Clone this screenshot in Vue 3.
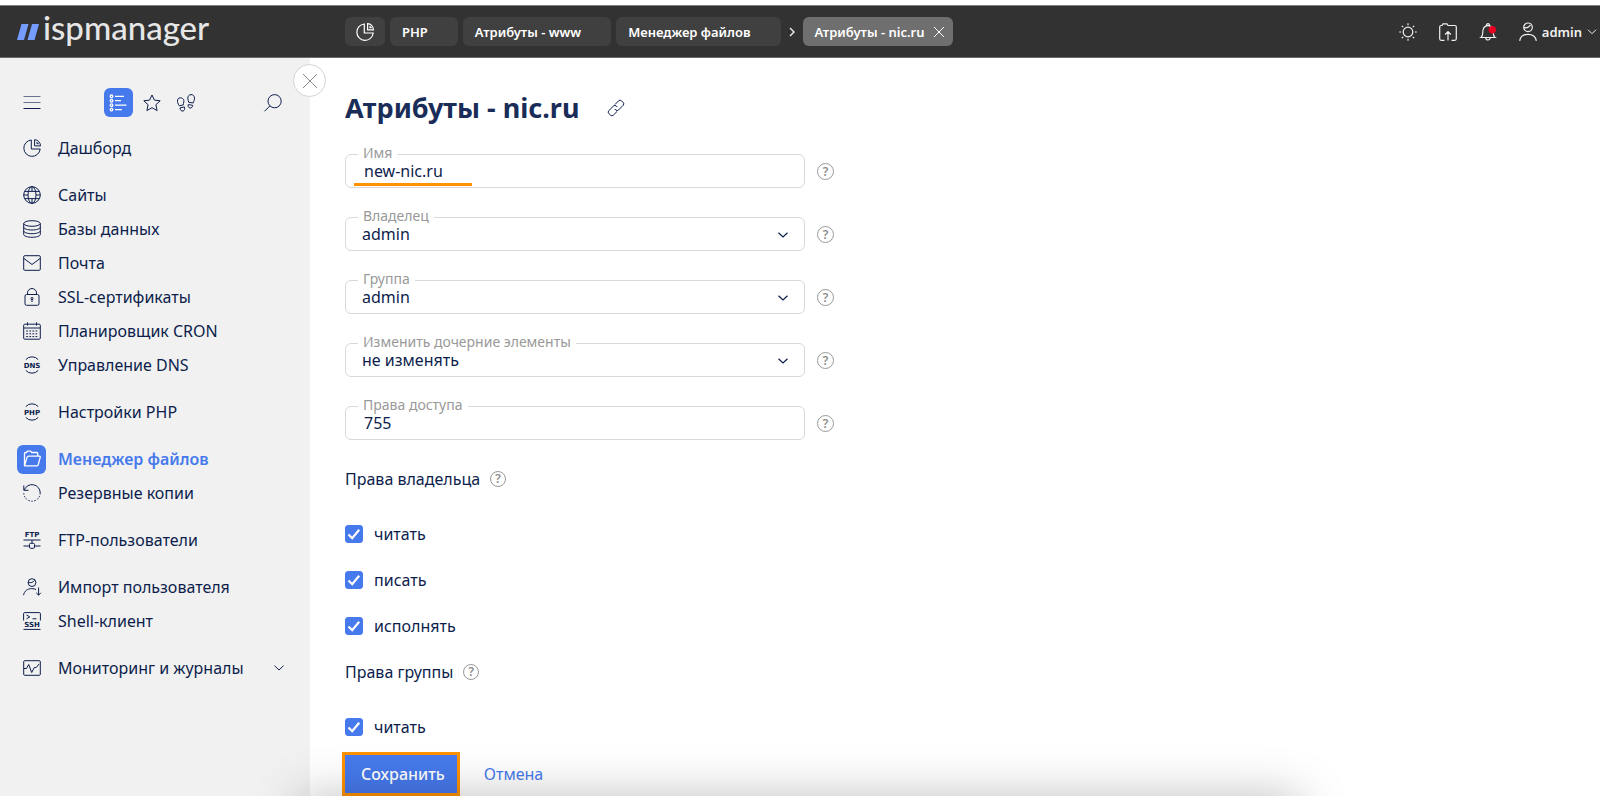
<script setup>
import { reactive, ref } from 'vue'

const tabs = [
  { title: 'PHP' },
  { title: 'Атрибуты - www' },
  { title: 'Менеджер файлов' },
]

const menu = [
  [{ icon: 'pie', title: 'Дашборд' }],
  [
    { icon: 'globe', title: 'Сайты' },
    { icon: 'db', title: 'Базы данных' },
    { icon: 'mail', title: 'Почта' },
    { icon: 'lock', title: 'SSL-сертификаты' },
    { icon: 'calendar', title: 'Планировщик CRON' },
    { icon: 'dns', title: 'Управление DNS' },
  ],
  [{ icon: 'php', title: 'Настройки PHP' }],
  [
    { icon: 'folder', title: 'Менеджер файлов', active: true },
    { icon: 'restore', title: 'Резервные копии' },
  ],
  [{ icon: 'ftp', title: 'FTP-пользователи' }],
  [
    { icon: 'import', title: 'Импорт пользователя' },
    { icon: 'ssh', title: 'Shell-клиент' },
  ],
  [{ icon: 'chart', title: 'Мониторинг и журналы', expandable: true }],
]

const icons = {
  pie: '<path d="M8.300 1A8.200 8.200 0 1 0 17.200 10H8.300z"/><path d="M11.600.7v6.200h5.900A6.200 6.200 0 0 0 11.600.7zM14 3v1.700h1.700"/>',
  globe: '<circle cx="9" cy="9" r="8.3"/><ellipse cx="9" cy="9" rx="4" ry="8.3"/><path d="M1.800 5.4h14.400M1.800 12.6h14.400M9 .7v4.7M9 12.6v4.7M.7 9H5M13 9h4.300"/>',
  db: '<ellipse cx="9" cy="3.500" rx="8.300" ry="2.800"/><path d="M.7 3.500v11c0 1.500 3.700 2.800 8.300 2.800s8.300-1.300 8.300-2.800v-11M.7 7.200C.7 8.700 4.400 10 9 10s8.300-1.300 8.300-2.800M.7 10.900c0 1.500 3.700 2.800 8.300 2.800s8.300-1.300 8.300-2.800"/>',
  mail: '<rect x=".7" y="1.700" width="16.600" height="14.600" rx="1"/><path d="M1 4.500l8 6 8-6"/>',
  lock: '<rect x="2" y="6.500" width="14" height="10.800" rx="1.500"/><path d="M4.500 6.500V5a4.500 4.500 0 0 1 9 0v1.500M9 11.500V14"/><circle cx="9" cy="10.600" r="1.100"/>',
  calendar: '<rect x=".7" y="2.200" width="16.600" height="15" rx="1"/><path d="M.7 6h16.600M4.500.3v3.200M13.500.3v3.200"/><path stroke-dasharray="1.800 1.300" d="M3.200 9h12.200M3.200 11.800h12.200M3.200 14.600h12.200"/>',
  dns: '<path d="M2.800 3.600a8.300 8.300 0 0 1 12.400 0M2.800 14.400a8.300 8.300 0 0 0 12.400 0"/><text x="9" y="11.600">DNS</text>',
  php: '<path d="M2.800 3.600a8.300 8.300 0 0 1 12.400 0M2.800 14.400a8.300 8.300 0 0 0 12.400 0"/><text x="9" y="11.600">PHP</text>',
  folder: '<path d="M1.500 15.700V3.500a1 1 0 0 1 1-1h1l.8-1.400h3.400l.9 1.400h5.200a1 1 0 0 1 1 1V6"/><path d="M1.500 15.700L4 7.500c.3-.9.700-1.300 1.500-1.300h10.800c.8 0 1.100.4.9 1.200l-2 7.300c-.3.800-.7 1.200-1.500 1.200H2.200c-.4 0-.6 0-.7-.2z"/>',
  restore: '<path d="M1.300 6A8.200 8.200 0 0 1 17.200 9M.8 1.500V6.300h4.700"/><path stroke-dasharray="1.500 1.500" d="M17.200 9A8.200 8.200 0 0 1 .8 9"/>',
  ftp: '<text x="9" y="5.500">FTP</text><path d="M.5 9h17M9 9v3M.5 15H6M12 15h5.500"/><rect x="6.500" y="12.300" width="5" height="5" rx="1.200"/>',
  import: '<circle cx="9" cy="4.600" r="3.900"/><path d="M5.300 4.500c2.500.6 5-.2 6.200-2.200M.6 17.200c.5-4.200 4-6.600 8.200-6.600 1.700 0 3 .3 4.200 1M15.600 9.500v7.600M13.200 14.800l2.400 2.400 2.200-2.400"/>',
  ssh: '<path d="M.6 8.500V1.600a1 1 0 0 1 1-1h14.800a1 1 0 0 1 1 1v6.900M3.500 3l3.300 1.900-3.300 1.900M9.500 6.800h4M.5 17.400h17"/><text x="9" y="15">SSH</text>',
  chart: '<rect x=".7" y="1.700" width="16.600" height="14.600" rx="1"/><path d="M.9 9.500h2.600l2.200-4 3 8 2.600-5h2l2.800-3.600"/>',
}

const form = reactive({
  name: 'new-nic.ru',
  owner: 'admin',
  group: 'admin',
  children: 'не изменять',
  mode: '755',
})

const fields = [
  { key: 'name', label: 'Имя', type: 'text', marked: true },
  { key: 'owner', label: 'Владелец', type: 'select' },
  { key: 'group', label: 'Группа', type: 'select' },
  { key: 'children', label: 'Изменить дочерние элементы', type: 'select' },
  { key: 'mode', label: 'Права доступа', type: 'text' },
]

const sections = ref([
  {
    title: 'Права владельца',
    items: [
      { id: 'owner-read', label: 'читать', on: true },
      { id: 'owner-write', label: 'писать', on: true },
      { id: 'owner-exec', label: 'исполнять', on: true },
    ],
  },
  { title: 'Права группы', items: [{ id: 'group-read', label: 'читать', on: true }] },
])
</script>

<template>
  <div class="app">
    <header class="topbar">
      <a class="logo" href="#">
        <svg class="logo-mark" viewBox="0 0 22 16" aria-hidden="true">
          <path d="M4.500 0h7L7 16H0zM15 0h7l-4.500 16h-7z" fill="#759dff" />
        </svg>
        <span>ispmanager</span>
      </a>
      <nav class="tabs">
        <button class="tab tab-home" aria-label="Дашборд">
          <svg class="icon" viewBox="0 0 18 18" v-html="icons.pie"></svg>
        </button>
        <button v-for="t in tabs" :key="t.title" class="tab">{{ t.title }}</button>
        <svg class="crumb" viewBox="0 0 6 10" aria-hidden="true"><path d="M1 1l4 4-4 4" /></svg>
        <button class="tab tab-active">
          Атрибуты - nic.ru
          <svg class="tab-close" viewBox="0 0 12 12" aria-hidden="true"><path d="M1 1l10 10M11 1L1 11" /></svg>
        </button>
      </nav>
      <div class="tools">
        <button class="tool" aria-label="Тема">
          <svg class="icon" viewBox="0 0 18 18">
            <circle cx="9" cy="9" r="4.800" />
            <path d="M9 .2v2M9 15.800v2M.2 9h2M15.800 9h2M2.800 2.800l1.400 1.400M13.800 13.800l1.400 1.400M2.800 15.200l1.400-1.400M13.800 4.200l1.400-1.400" />
          </svg>
        </button>
        <button class="tool" aria-label="Загрузить">
          <svg class="icon" viewBox="0 0 18 18">
            <path d="M5.500 17.300H2.200a1.500 1.500 0 0 1-1.500-1.500V4A1.500 1.500 0 0 1 2.200 2.500h.9L4 .8h4l1 1.700h6.800A1.500 1.500 0 0 1 17.300 4v11.800a1.500 1.500 0 0 1-1.500 1.500h-3.300M9 17.500V9M6 11.700l3-3 3 3" />
          </svg>
        </button>
        <button class="tool" aria-label="Уведомления">
          <svg class="icon" viewBox="0 0 18 18">
            <path d="M2 14.500c1.500-1 1.700-2.300 1.700-4.800C3.700 5 5.500 2.600 9 2.600s5.300 2.400 5.300 7.100c0 2.500.2 3.800 1.700 4.800zM7.600 2.700a1.500 1.500 0 1 1 2.800 0M6.800 14.800a2.200 2.200 0 0 0 4.400 0" />
            <circle cx="13.300" cy="6.700" r="3.700" fill="#eb0023" stroke="none" />
          </svg>
        </button>
        <button class="tool user">
          <svg class="icon" viewBox="0 0 18 18">
            <circle cx="9" cy="4.300" r="4.300" />
            <path d="M5 4.600c2.600.5 5.200-.4 6.400-2.600M.7 17.800c.7-4.300 4-6.500 8.300-6.500s7.600 2.200 8.300 6.500" />
          </svg>
          <span>admin</span>
          <svg class="chevron" viewBox="0 0 10 6"><path d="M1 .7l4 4 4-4" /></svg>
        </button>
      </div>
    </header>

    <div class="body">
      <aside class="sidebar">
        <div class="side-tools">
          <button class="side-btn" aria-label="Меню">
            <svg class="icon" viewBox="0 0 18 18"><path d="M.5 2.500h17M.5 8.500h17" opacity=".6" /><path d="M.5 14.500h17" /></svg>
          </button>
          <div class="side-modes">
            <button class="side-btn side-btn-on" aria-label="Список">
              <svg class="icon" viewBox="0 0 18 18">
                <circle cx="2.500" cy="2.300" r="1.300" /><circle cx="2.500" cy="6.700" r="1.300" />
                <circle cx="2.500" cy="11.200" r="1.300" /><circle cx="2.500" cy="15.600" r="1.300" />
                <path d="M6 2.300h9M6 6.700h6M6 11.200h11.500M6 15.600h7" />
              </svg>
            </button>
            <button class="side-btn" aria-label="Избранное">
              <svg class="icon" viewBox="0 0 18 18">
                <path d="M9 1l2.400 5.100 5.800.7-4.300 3.900 1.200 5.900L9 13.700l-5.100 2.900 1.200-5.900L.8 6.800l5.800-.7z" stroke-linejoin="round" />
              </svg>
            </button>
            <button class="side-btn" aria-label="История">
              <svg class="icon" viewBox="0 0 18 18">
                <path d="M2.300 11.800C.9 9.800.1 7.600.6 5.800c.5-1.600 2-2.300 3.700-1.900 2 .5 2.800 2 2.500 4-.2 1.200-.6 1.900-.5 3zM3 13.900l4.300-1c.8 1.800.4 3.600-1.200 4.100S3 16 3 13.900z" />
                <path d="M11.700 8.300c0-1.300-1-2.400-.9-4.100C10.900 2 12.200.6 14 .6c2 0 3.400 1.300 3.500 3.300.1 1.800-.7 3.400-1.400 5.100zM11.200 10.600l4.500.7c-.1 1.900-1.400 3-2.800 2.700-1.400-.3-2.100-1.700-1.700-3.400z" />
              </svg>
            </button>
          </div>
          <button class="side-btn" aria-label="Поиск">
            <svg class="icon" viewBox="0 0 18 18"><circle cx="10.600" cy="7.200" r="6.600" /><path d="M5.800 12L.5 17.300" /></svg>
          </button>
        </div>
        <nav class="menu">
          <ul v-for="(group, i) in menu" :key="i" class="menu-group">
            <li v-for="m in group" :key="m.title">
              <a href="#" class="menu-item" :class="{ 'menu-item-on': m.active }">
                <span class="menu-icon"><svg class="icon" viewBox="0 0 18 18" v-html="icons[m.icon]"></svg></span>
                <span class="menu-title">{{ m.title }}</span>
                <svg v-if="m.expandable" class="chevron" viewBox="0 0 10 6"><path d="M.5.7L5 5 9.500.7" /></svg>
              </a>
            </li>
          </ul>
        </nav>
        <button class="collapse" aria-label="Закрыть">
          <svg viewBox="0 0 16 16"><path d="M1 1l14 14M15 1L1 15" /></svg>
        </button>
      </aside>

      <main class="main">
        <form class="form" @submit.prevent>
          <div class="scroll">
            <div class="heading">
              <h1>Атрибуты - nic.ru</h1>
              <button type="button" class="link-btn" aria-label="Ссылка">
                <svg class="icon" viewBox="0 0 18 18">
                  <path d="M8 5.500l3.700-3.700a2 2 0 0 1 2.800 0l1.700 1.700a2 2 0 0 1 0 2.800L11.500 11a2 2 0 0 1-2.800 0l-1-1" />
                  <path d="M10 12.500l-3.700 3.700a2 2 0 0 1-2.800 0l-1.700-1.700a2 2 0 0 1 0-2.800L6.500 7a2 2 0 0 1 2.800 0l1 1" />
                </svg>
              </button>
            </div>

            <div class="fields">
              <div v-for="f in fields" :key="f.key" class="field">
                <div class="box" :class="'box-' + f.type">
                  <label :for="f.key">{{ f.label }}</label>
                  <input v-if="f.type === 'text'" :id="f.key" v-model="form[f.key]" type="text" />
                  <select v-else :id="f.key" v-model="form[f.key]">
                    <option>{{ form[f.key] }}</option>
                  </select>
                  <svg v-if="f.type === 'select'" class="chevron" viewBox="0 0 10 6"><path d="M.5.7L5 5 9.500.7" /></svg>
                  <span v-if="f.marked" class="marker"></span>
                </div>
                <button type="button" class="help" aria-label="Справка">?</button>
              </div>
            </div>

            <section v-for="s in sections" :key="s.title" class="rights">
              <div class="rights-head">
                <h2>{{ s.title }}</h2>
                <button type="button" class="help help-small" aria-label="Справка">?</button>
              </div>
              <div class="checks">
                <label v-for="c in s.items" :key="c.id" class="check" :for="c.id">
                  <span class="tick">
                    <input :id="c.id" v-model="c.on" type="checkbox" />
                    <svg v-if="c.on" viewBox="0 0 18 18" aria-hidden="true"><path d="M3.500 9.500l3.700 3.700L14.200 4.800" /></svg>
                  </span>
                  {{ c.label }}
                </label>
              </div>
            </section>
          </div>
          <footer class="actions">
            <button type="submit" class="save">Сохранить</button>
            <button type="button" class="cancel">Отмена</button>
          </footer>
        </form>
      </main>
      <div class="shade" aria-hidden="true"></div>
    </div>
  </div>
</template>

<style>
body {
  margin: 0;
  background: #fff;
}
</style>

<style scoped>
* {
  box-sizing: border-box;
}
.app {
  display: flex;
  flex-direction: column;
  height: 100vh;
  padding-top: 5px;
  overflow: hidden;
  color: #0d1e4c;
  font-family: "Noto Sans", "Open Sans", sans-serif;
  font-size: 16px;
}
button {
  padding: 0;
  border: 0;
  background: none;
  color: inherit;
  font: inherit;
  cursor: pointer;
}
a {
  color: inherit;
  text-decoration: none;
}
svg {
  display: block;
  flex: none;
  fill: none;
  stroke: currentColor;
}
.icon {
  width: 18px;
  height: 18px;
  overflow: visible;
}
.icon :deep(text) {
  fill: currentColor;
  stroke: none;
  font-family: "DejaVu Sans", sans-serif;
  font-size: 7px;
  font-weight: 700;
  text-anchor: middle;
}
.chevron {
  width: 10px;
  height: 6px;
}

.topbar {
  display: flex;
  flex: none;
  align-items: center;
  height: 53px;
  padding: 0 3px 0 17px;
  border-top: 1px solid #7f7f7f;
  border-bottom: 1px solid #6a6a6a;
  background: #323232;
  color: #f0f0f0;
}
.topbar .icon {
  stroke-width: 1.2;
}
.logo {
  display: flex;
  align-items: baseline;
  gap: 4px;
  width: 328px;
  padding-bottom: 10px;
  color: #e6e6e6;
  font-family: Lato, sans-serif;
  font-size: 33px;
  font-weight: 500;
  line-height: 40px;
}
.logo-mark {
  width: 22px;
  height: 16px;
  stroke: none;
}
.tabs {
  display: flex;
  flex: 1;
  align-items: center;
  gap: 5px;
}
.tab {
  height: 29px;
  padding: 0 30px 0 12px;
  border-radius: 6px;
  background: #404040;
  color: #fff;
  font-size: 13px;
  font-weight: 600;
  white-space: nowrap;
}
.tab-home {
  padding: 0 11px;
}
.tab-active {
  display: flex;
  align-items: center;
  gap: 8px;
  padding: 0 8px 0 12px;
  background: #6f6f6f;
}
.tab-close {
  width: 12px;
  height: 12px;
}
.crumb {
  width: 6px;
  height: 10px;
  margin: 0 3px;
  stroke-width: 1.4;
}
.tools {
  display: flex;
  align-items: center;
  gap: 22px;
}
.user {
  display: flex;
  align-items: center;
  gap: 5px;
  font-size: 13px;
  font-weight: 600;
}

.body {
  position: relative;
  display: flex;
  flex: 1;
  min-height: 0;
}
.sidebar {
  position: relative;
  flex: none;
  width: 310px;
  padding: 30px 17px 0;
  background: #f1f1f1;
}
.side-tools {
  display: flex;
  align-items: center;
  justify-content: space-between;
  padding-right: 6px;
}
.side-modes {
  display: flex;
  gap: 5px;
}
.side-btn {
  display: grid;
  place-items: center;
  width: 29px;
  height: 29px;
  border-radius: 6px;
}
.side-btn-on,
.menu-item-on .menu-icon {
  background: #4679ec;
  color: #fff;
}
.side-btn-on .icon,
.menu-item-on .icon {
  stroke-width: 1.3;
}
.menu {
  display: flex;
  flex-direction: column;
  gap: 13px;
  margin-top: 14px;
}
.menu-group {
  margin: 0;
  padding: 0;
  list-style: none;
}
.menu-item {
  display: flex;
  align-items: center;
  gap: 12px;
  height: 34px;
  padding-right: 9px;
}
.menu-icon {
  display: grid;
  flex: none;
  place-items: center;
  width: 29px;
  height: 29px;
  border-radius: 6px;
}
.menu-title {
  flex: 1;
  white-space: nowrap;
}
.menu-item-on {
  color: #4679ec;
  font-weight: 600;
}
.collapse {
  position: absolute;
  top: 6px;
  right: -16px;
  display: grid;
  place-items: center;
  width: 33px;
  height: 33px;
  border: 1px solid #d4d4d4;
  border-radius: 50%;
  background: #fff;
  color: #8a8a8a;
}
.collapse svg {
  width: 16px;
  height: 16px;
}

.main {
  flex: 1;
  min-width: 0;
  padding-left: 35px;
}
.form {
  display: flex;
  flex-direction: column;
  height: 100%;
}
.scroll {
  flex: 1;
  min-height: 0;
  overflow: hidden;
}
.heading {
  display: flex;
  align-items: center;
  gap: 28px;
  padding: 30px 0 26px;
}
h1 {
  margin: 0;
  color: #1a2c58;
  font-size: 27px;
  font-weight: 700;
  line-height: 40px;
}
.fields {
  display: flex;
  flex-direction: column;
  gap: 29px;
}
.field {
  display: flex;
  align-items: center;
  gap: 12px;
}
.box {
  position: relative;
  width: 460px;
}
.box label {
  position: absolute;
  top: -11px;
  left: 13px;
  padding: 0 5px;
  background: #fff;
  color: #999;
  font-size: 14px;
  line-height: 20px;
}
.box input,
.box select {
  display: block;
  width: 100%;
  height: 34px;
  padding: 0 18px;
  border: 1px solid #d9d9d9;
  border-radius: 6px;
  background: #fff;
  color: inherit;
  font: inherit;
  appearance: none;
}
.box select {
  padding: 0 16px;
}
.box .chevron {
  position: absolute;
  top: 15px;
  right: 17px;
  stroke-width: 1.2;
  pointer-events: none;
}
.marker {
  position: absolute;
  bottom: 2px;
  left: 9px;
  width: 118px;
  height: 3px;
  background: #ff9200;
}
.help {
  width: 17px;
  height: 17px;
  border: 1px solid #999;
  border-radius: 50%;
  color: #8c8c8c;
  font-size: 12px;
  font-weight: 600;
  line-height: 15px;
}
.help-small {
  width: 16px;
  height: 16px;
  line-height: 14px;
}
.rights {
  margin-top: 27px;
}
.rights + .rights {
  margin-top: 24px;
}
.rights-head {
  display: flex;
  align-items: center;
  gap: 10px;
}
h2 {
  margin: 0;
  font-size: 16px;
  font-weight: 400;
  line-height: 24px;
}
.checks {
  display: flex;
  flex-direction: column;
  align-items: flex-start;
  gap: 26px;
  margin-top: 33px;
}
.check {
  display: flex;
  align-items: center;
  gap: 11px;
  height: 20px;
}
.tick {
  position: relative;
}
.tick input {
  display: block;
  width: 18px;
  height: 18px;
  margin: 0;
  border: 1px solid #4679ec;
  border-radius: 3px;
  appearance: none;
}
.tick input:checked {
  background: #4679ec;
}
.tick svg {
  position: absolute;
  inset: 0;
  color: #fff;
  stroke-width: 2.2;
  pointer-events: none;
}
.actions {
  display: flex;
  flex: none;
  align-items: center;
  gap: 24px;
  height: 44px;
  margin-left: -3px;
}
.save {
  height: 44px;
  padding: 0 12px 0 16px;
  border: 3px solid #ff9200;
  background: #4679ec;
  color: #fff;
  font-weight: 500;
}
.cancel {
  color: #4679ec;
}
.shade {
  position: absolute;
  top: 100%;
  right: 300px;
  left: 300px;
  height: 90px;
  box-shadow: 0 0 48px rgba(0, 0, 0, 0.25);
  pointer-events: none;
}
</style>
